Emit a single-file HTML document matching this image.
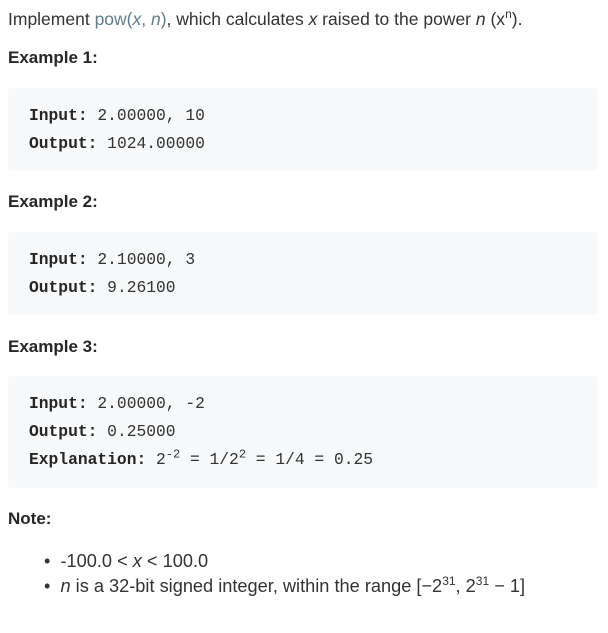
<!DOCTYPE html>
<html><head><style>
body{margin:0;background:#fff;font-family:"Liberation Sans",sans-serif;color:#333;font-size:17.5px;}
.w{position:relative;width:608px;height:633px;}
.t{position:absolute;left:8px;white-space:nowrap;}
.h{font-weight:bold;font-size:17px;color:#262626;}
.box{position:absolute;left:8px;width:590px;background:#f7f9fa;border-radius:4px;}
.box div{position:absolute;left:21px;font-family:"Liberation Mono","DejaVu Sans Mono",monospace;font-size:16.3px;color:#333;white-space:nowrap;line-height:20px;}
.box b{color:#262626;}
sup{font-size:12px;line-height:0;}
i{font-style:italic;}
.a{color:#607d8b;}
</style></head><body><div class="w">
<div class="t" style="top:9px;">Implement <span class="a">pow(<i>x</i>, <i>n</i>)</span>, which calculates <i>x</i> raised to the power <i>n</i> (x<sup>n</sup>).</div>
<div class="t h" style="top:48px;">Example 1:</div>
<div class="box" style="top:88px;height:82px;"><div style="top:18px;"><b>Input:</b> 2.00000, 10</div><div style="top:46px;"><b>Output:</b> 1024.00000</div></div>
<div class="t h" style="top:192px;">Example 2:</div>
<div class="box" style="top:232px;height:83px;"><div style="top:18px;"><b>Input:</b> 2.10000, 3</div><div style="top:46px;"><b>Output:</b> 9.26100</div></div>
<div class="t h" style="top:337px;">Example 3:</div>
<div class="box" style="top:376px;height:112px;"><div style="top:18px;"><b>Input:</b> 2.00000, -2</div><div style="top:46px;"><b>Output:</b> 0.25000</div><div style="top:74px;"><b>Explanation:</b> 2<sup>-2</sup> = 1/2<sup>2</sup> = 1/4 = 0.25</div></div>
<div class="t h" style="top:509px;">Note:</div>
<div class="t" style="top:551px;left:44px;font-size:18.2px;">• &nbsp;-100.0 &lt; <i>x</i> &lt; 100.0</div>
<div class="t" style="top:576px;left:44px;font-size:18.2px;">• &nbsp;<i>n</i> is a 32-bit signed integer, within the range [−2<sup>31</sup>, 2<sup>31</sup> − 1]</div>
</div></body></html>
